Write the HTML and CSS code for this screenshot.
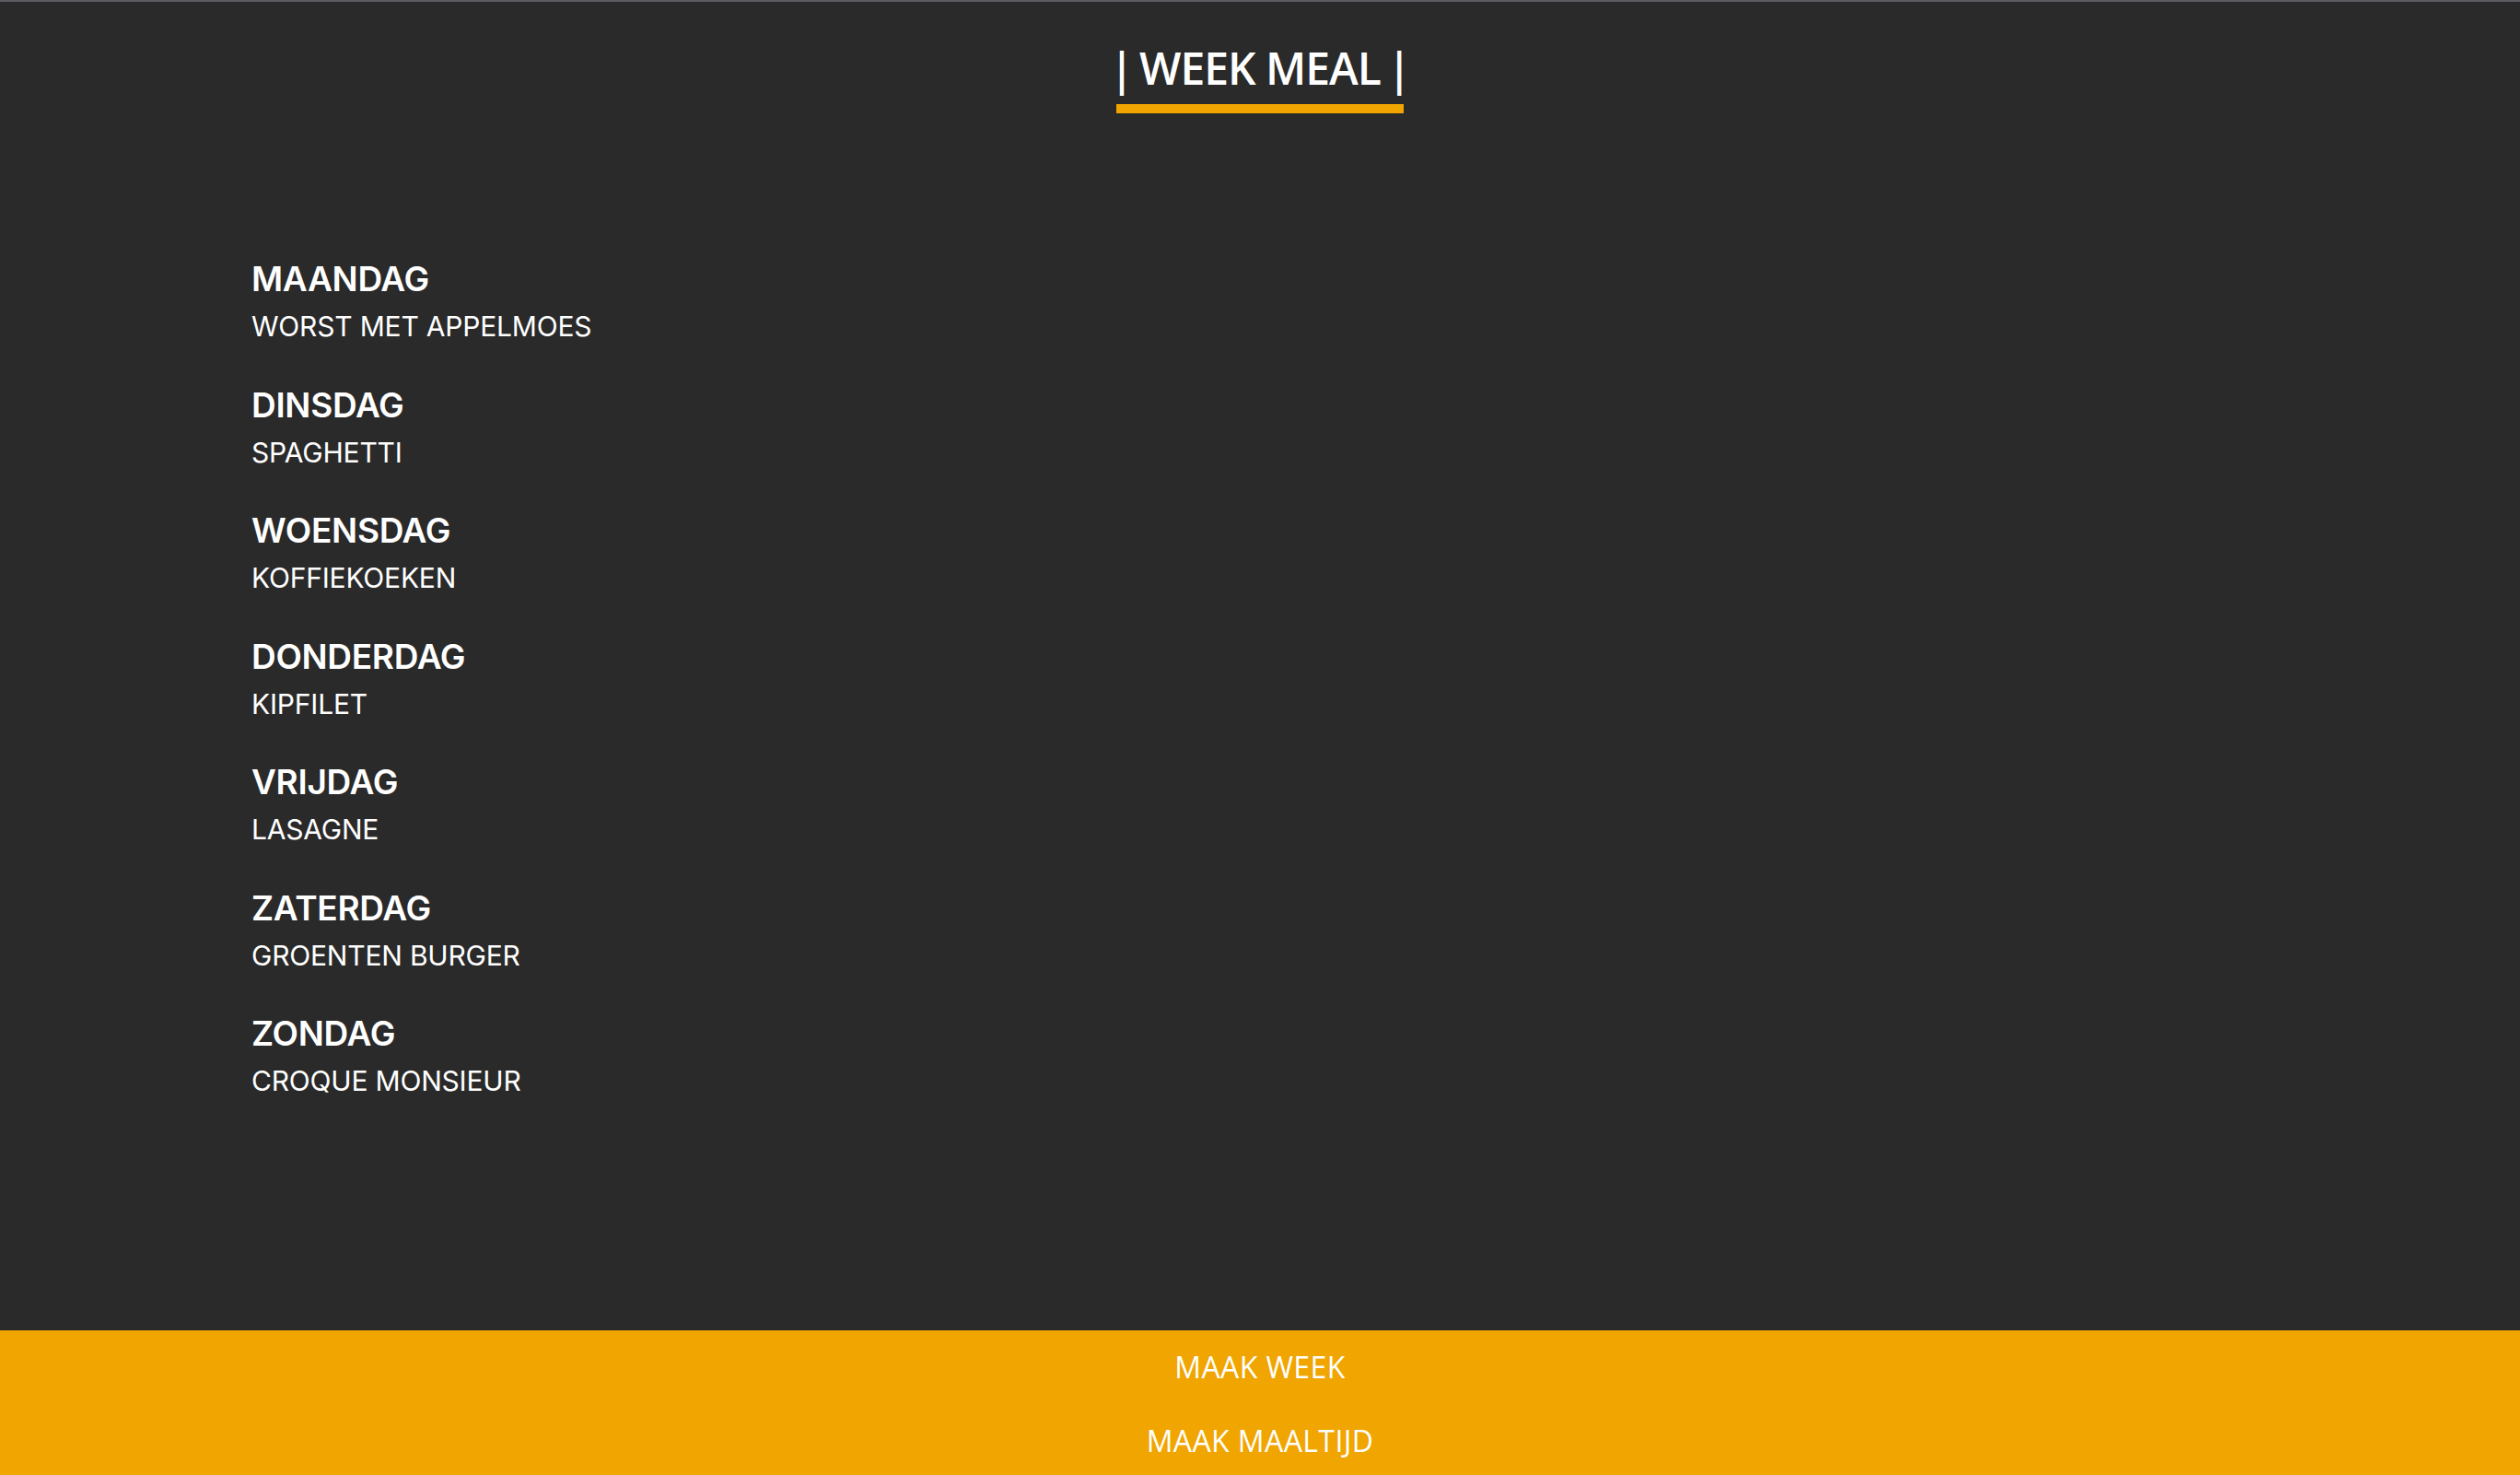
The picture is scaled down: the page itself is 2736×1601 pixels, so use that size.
FILE: index.html
```html
<!DOCTYPE html>
<html lang="nl">
<head>
<meta charset="utf-8">
<title>Week Meal</title>
<link rel="stylesheet" href="styles.css">
</head>
<body>
<header class="header">
  <h1 class="title"><span class="bar bar-left">|</span><span class="title-text">WEEK MEAL</span><span class="bar bar-right">|</span></h1>
</header>
<main class="week">
  <div class="day"><h2 class="day-name">MAANDAG</h2><p class="meal">WORST MET APPELMOES</p></div>
  <div class="day"><h2 class="day-name">DINSDAG</h2><p class="meal">SPAGHETTI</p></div>
  <div class="day"><h2 class="day-name">WOENSDAG</h2><p class="meal">KOFFIEKOEKEN</p></div>
  <div class="day"><h2 class="day-name">DONDERDAG</h2><p class="meal">KIPFILET</p></div>
  <div class="day"><h2 class="day-name">VRIJDAG</h2><p class="meal">LASAGNE</p></div>
  <div class="day"><h2 class="day-name">ZATERDAG</h2><p class="meal">GROENTEN BURGER</p></div>
  <div class="day"><h2 class="day-name">ZONDAG</h2><p class="meal">CROQUE MONSIEUR</p></div>
</main>
<footer class="actions">
  <button class="action">MAAK WEEK</button>
  <button class="action">MAAK MAALTIJD</button>
</footer>
</body>
</html>
```
FILE: styles.css
```css
html, body {
  margin: 0;
  padding: 0;
}
body {
  background: #2a2a2a;
  border-top: 2px solid #5b5a5f;
  color: #ffffff;
  font-family: "Open Sans", "Liberation Sans", sans-serif;
}
.header {
  display: flex;
  justify-content: center;
  padding-top: 48px;
}
.title {
  margin: 0;
  display: flex;
  gap: 7px;
  font-family: "Open Sans", sans-serif;
  font-weight: 600;
  font-size: 48px;
  line-height: 48px;
  padding: 0 0 15px;
  border-bottom: 10px solid #f0a500;
  letter-spacing: -1px;
}
.bar-left {
  margin-left: -7px;
}
.bar-right {
  margin-right: -7px;
}
.week {
  display: flex;
  flex-direction: column;
  gap: 41.5px;
  padding: 156px 0 0 273px;
}
.day {
  display: flex;
  flex-direction: column;
  gap: 7px;
}
.day-name {
  margin: 0;
  font-family: "Inter", sans-serif;
  font-weight: 600;
  font-size: 37px;
  line-height: 48px;
  letter-spacing: -0.3px;
}
.meal {
  margin: 0;
  font-family: "Inter", sans-serif;
  font-weight: 400;
  font-size: 30px;
  line-height: 40px;
  letter-spacing: -0.2px;
}
.actions {
  margin-top: 251px;
  background: #f0a500;
  display: flex;
  flex-direction: column;
}
.action {
  background: none;
  border: none;
  color: #ffffff;
  font-family: "Open Sans", sans-serif;
  font-size: 32px;
  letter-spacing: 0.4px;
  line-height: 80px;
  height: 80px;
  padding: 0;
  cursor: pointer;
}
```
